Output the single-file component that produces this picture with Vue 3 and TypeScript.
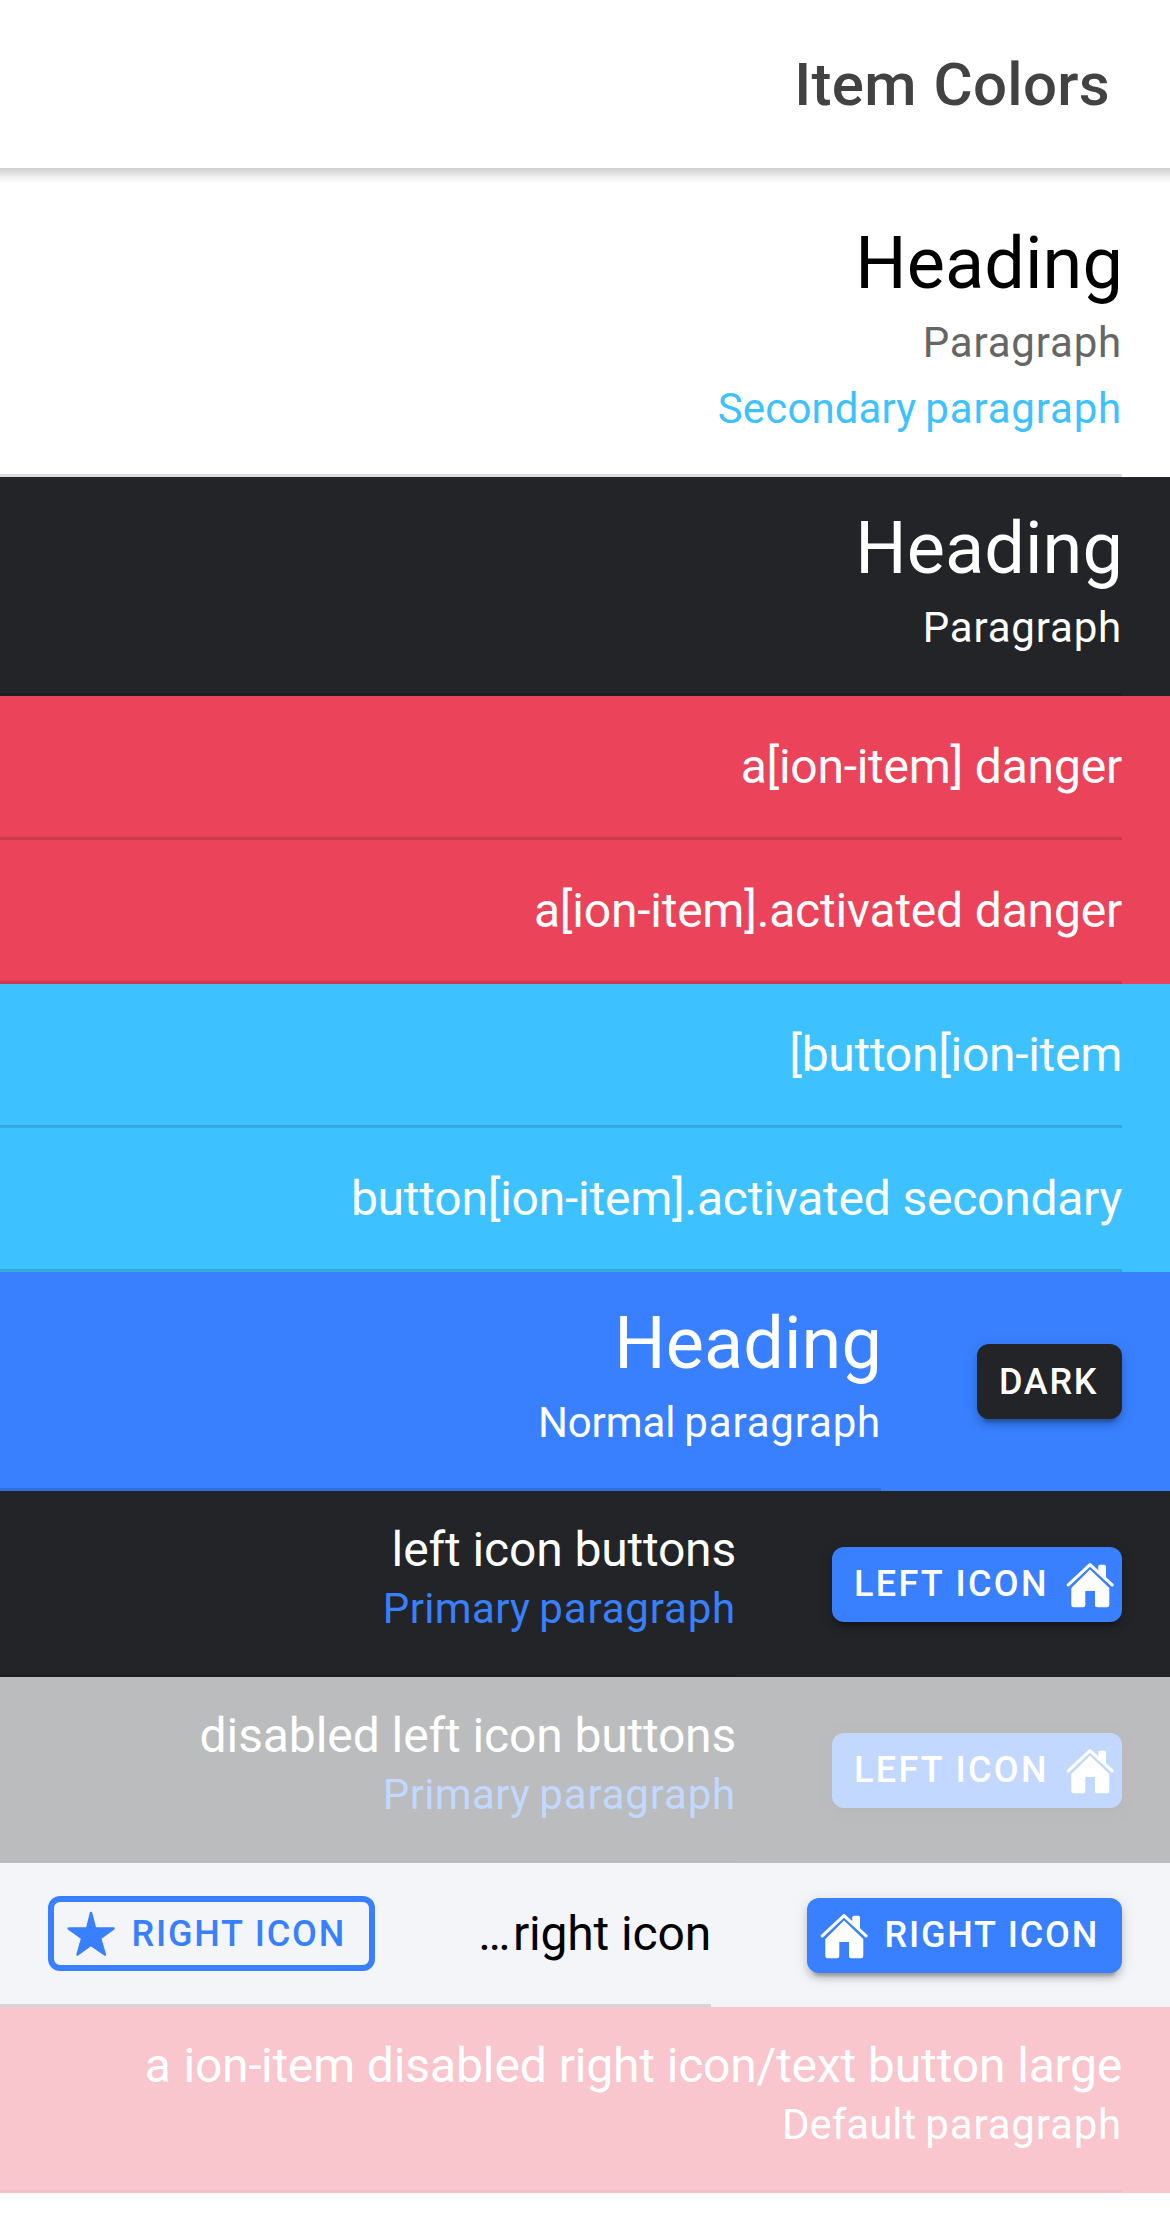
<script setup lang="ts">
/** A word, its tracking in pixels, and whether it joins the word before it. */
type Word = [text: string, tracking?: number, joined?: boolean]

interface Row {
  color: string
  size: 'tall' | 'single' | 'double' | 'first'
  heading?: string
  text?: Word[]
  paras?: { words: Word[]; tone?: string }[]
  disabled?: boolean
  button?: { text: string; kind: 'plain' | 'after' | 'before'; color: string }
  outline?: string
}

const left: Word[] = [['left', -0.15], ['icon', -0.16], ['buttons', -0.2]]
const primary = { words: [['Primary', 0.34], ['paragraph', 0.82]] as Word[], tone: 'primary' }

const rows: Row[] = [
  { color: 'plain', size: 'first', heading: 'Heading', paras: [{ words: [['Paragraph', 0.82]], tone: 'muted' }, { words: [['Secondary', 0.13], ['paragraph', 0.82]], tone: 'secondary' }] },
  { color: 'dark', size: 'tall', heading: 'Heading', paras: [{ words: [['Paragraph', 0.82]] }] },
  { color: 'danger', size: 'single', text: [['a[ion-item]', -0.28], ['danger', -0.2]] },
  { color: 'danger', size: 'single', text: [['a[ion-item].activated', -0.23], ['danger', -0.2]] },
  { color: 'secondary', size: 'single', text: [['[button[ion-item', -0.29]] },
  { color: 'secondary', size: 'single', text: [['button[ion-item].activated', -0.24], ['secondary', -0.26]] },
  { color: 'primary', size: 'tall', heading: 'Heading', paras: [{ words: [['Normal', -0.1], ['paragraph', 0.82]] }], button: { text: 'DARK', kind: 'plain', color: 'dark' } },
  { color: 'dark', size: 'double', text: left, paras: [primary], button: { text: 'LEFT ICON', kind: 'after', color: 'primary' } },
  { color: 'dark', size: 'double', text: [['disabled', -0.08], ...left], disabled: true, paras: [primary], button: { text: 'LEFT ICON', kind: 'after', color: 'primary' } },
  { color: 'light', size: 'single', text: [['…', 2.5], ['right', -0.18, true], ['icon', -0.16]], button: { text: 'RIGHT ICON', kind: 'before', color: 'primary' }, outline: 'RIGHT ICON' },
  { color: 'danger', size: 'double', text: [['a', 0.9], ['ion-item', -0.32], ['disabled', -0.08], ['right', -0.18], ['icon/text', -0.22], ['button', -0.11], ['large', -0.27]], disabled: true, paras: [{ words: [['Default', 0], ['paragraph', 0.82]] }] },
]
</script>

<template>
  <div class="app">
    <header class="toolbar"><h1 class="title">Item Colors</h1></header>
    <main class="list">
      <div v-for="(row, i) in rows" :key="i" class="item" :class="[`bg-${row.color}`, row.size, { disabled: row.disabled }]">
        <div class="inner">
          <button v-if="row.outline" class="btn outline">
            <svg class="icon" viewBox="0 0 48 48"><path d="M24 2.900 28.200 18.500H46.600L33.200 28.400 37.900 44.600 24 34.900 10.500 44.600 15.100 28.400 1.600 18.500H20.100Z" fill="currentColor" stroke="currentColor" stroke-width="2.400" stroke-linejoin="round" /></svg>
            <span>{{ row.outline }}</span>
          </button>
          <div class="label">
            <h2 v-if="row.heading" class="heading">{{ row.heading }}</h2>
            <div v-if="row.text" class="text">
              <template v-for="([word, tracking, joined], w) in row.text" :key="w">{{ w && !joined ? ' ' : '' }}<span :style="{ letterSpacing: `${tracking ?? 0}px` }">{{ word }}</span></template>
            </div>
            <p v-for="(p, k) in row.paras" :key="k" class="para" :class="p.tone && `tone-${p.tone}`">
              <template v-for="([word, tracking], w) in p.words" :key="w">{{ w ? ' ' : '' }}<span :style="{ letterSpacing: `${tracking ?? 0}px` }">{{ word }}</span></template>
            </p>
          </div>
        </div>
        <button v-if="row.button" class="btn solid" :class="[`btn-${row.button.color}`, row.button.kind]">
          <span>{{ row.button.text }}</span>
          <svg v-if="row.button.kind !== 'plain'" class="icon" viewBox="0 0 48 48">
            <path d="M24 9.500 43.300 28V45Q43.300 47.300 41 47.300H31.300Q29 47.300 29 45V31H19.300V45Q19.300 47.300 17 47.300H7.600Q5.300 47.300 5.300 45V28Z" fill="currentColor" />
            <path d="M32.300 12V6.200Q32.300 4.700 33.800 4.700H38.500Q40 4.700 40 6.200V19Z" fill="currentColor" />
            <path d="M2.300 24.900 24 4.600 46.100 24.900" fill="none" stroke="currentColor" stroke-width="3.100" stroke-linecap="round" stroke-linejoin="round" />
          </svg>
        </button>
      </div>
    </main>
  </div>
</template>

<style>
body {
  margin: 0;
  background: #fff;
}
</style>

<style scoped>
.app {
  width: 1170px;
  height: 2217px;
  overflow: hidden;
  background: #fff;
  font-family: Roboto, sans-serif;
  color: #000;
}
.toolbar {
  position: relative;
  display: flex;
  align-items: center;
  justify-content: flex-end;
  height: 168px;
  padding: 0 60px;
  box-sizing: border-box;
}
.toolbar::after {
  content: '';
  position: absolute;
  left: 0;
  right: 0;
  top: 168px;
  height: 15px;
  background: linear-gradient(#cfcfcf, #dedede 30%, #f3f3f3 65%, #fdfdfd);
}
.title {
  margin: 0;
  font-size: 60px;
  font-weight: 500;
  letter-spacing: 0.3px;
  word-spacing: 1.5px;
  color: #424242;
}
.list {
  padding-top: 24px;
}
.item {
  display: flex;
  align-items: center;
  justify-content: flex-end;
  padding-right: 48px;
}
.first { height: 285px; }
.tall { height: 219px; }
.double { height: 186px; }
.single { height: 144px; }
.inner {
  flex: 1;
  align-self: stretch;
  display: flex;
  align-items: center;
  justify-content: flex-end;
  box-sizing: border-box;
  border-bottom: 3px solid rgba(0, 0, 0, 0.13);
}
.label {
  flex: 1;
  min-width: 0;
  text-align: right;
  white-space: nowrap;
  padding: 30px 0;
}
.heading {
  margin: 0 -1px 6px 0;
  font-size: 72px;
  line-height: 84px;
  font-weight: 400;
  letter-spacing: 0.1px;
}
.text {
  font-size: 48px;
  line-height: 57px;
}
.para {
  margin: 0 0 6px;
  padding-top: 2px;
  font-size: 42px;
  line-height: 58px;
  word-spacing: -1.4px;
}
.tone-muted { color: #666; }
.tone-secondary { color: #3dc2ff; }
.tone-primary { color: #3880ff; }
.bg-dark { background: #222428; color: #fff; }
.bg-danger { background: #eb445a; color: #fff; }
.bg-secondary { background: #3dc2ff; color: #fff; }
.bg-primary { background: #3880ff; color: #fff; }
.bg-light { background: #f4f5f8; color: #000; }
.disabled { opacity: 0.3; }
.btn {
  display: flex;
  align-items: center;
  justify-content: space-between;
  flex: none;
  height: 75px;
  box-sizing: border-box;
  border: 0;
  border-radius: 12px;
  font: 500 36px/75px Roboto, sans-serif;
  white-space: nowrap;
  color: #fff;
}
.solid {
  margin-left: 96px;
  box-shadow: 0 9px 3px -6px rgba(0, 0, 0, 0.2), 0 6px 6px 0 rgba(0, 0, 0, 0.14), 0 3px 15px 0 rgba(0, 0, 0, 0.12);
}
.btn-dark { background: #222428; }
.btn-primary { background: #3880ff; }
.plain {
  width: 145px;
  padding: 2px 22px 0;
  letter-spacing: 1.7px;
}
.after {
  width: 290px;
  padding: 0 8px 0 22px;
  letter-spacing: 2.300px;
}
.before {
  width: 315px;
  padding: 0 23px 0 13px;
  flex-direction: row-reverse;
  letter-spacing: 1.8px;
}
.outline {
  width: 327px;
  margin-left: 48px;
  padding: 0 23px 0 13px;
  background: transparent;
  border: 6px solid #3880ff;
  color: #3880ff;
  line-height: 61px;
  letter-spacing: 1.8px;
}
.outline span {
  padding-top: 2px;
}
.icon {
  width: 48px;
  height: 48px;
  flex: none;
}
</style>
